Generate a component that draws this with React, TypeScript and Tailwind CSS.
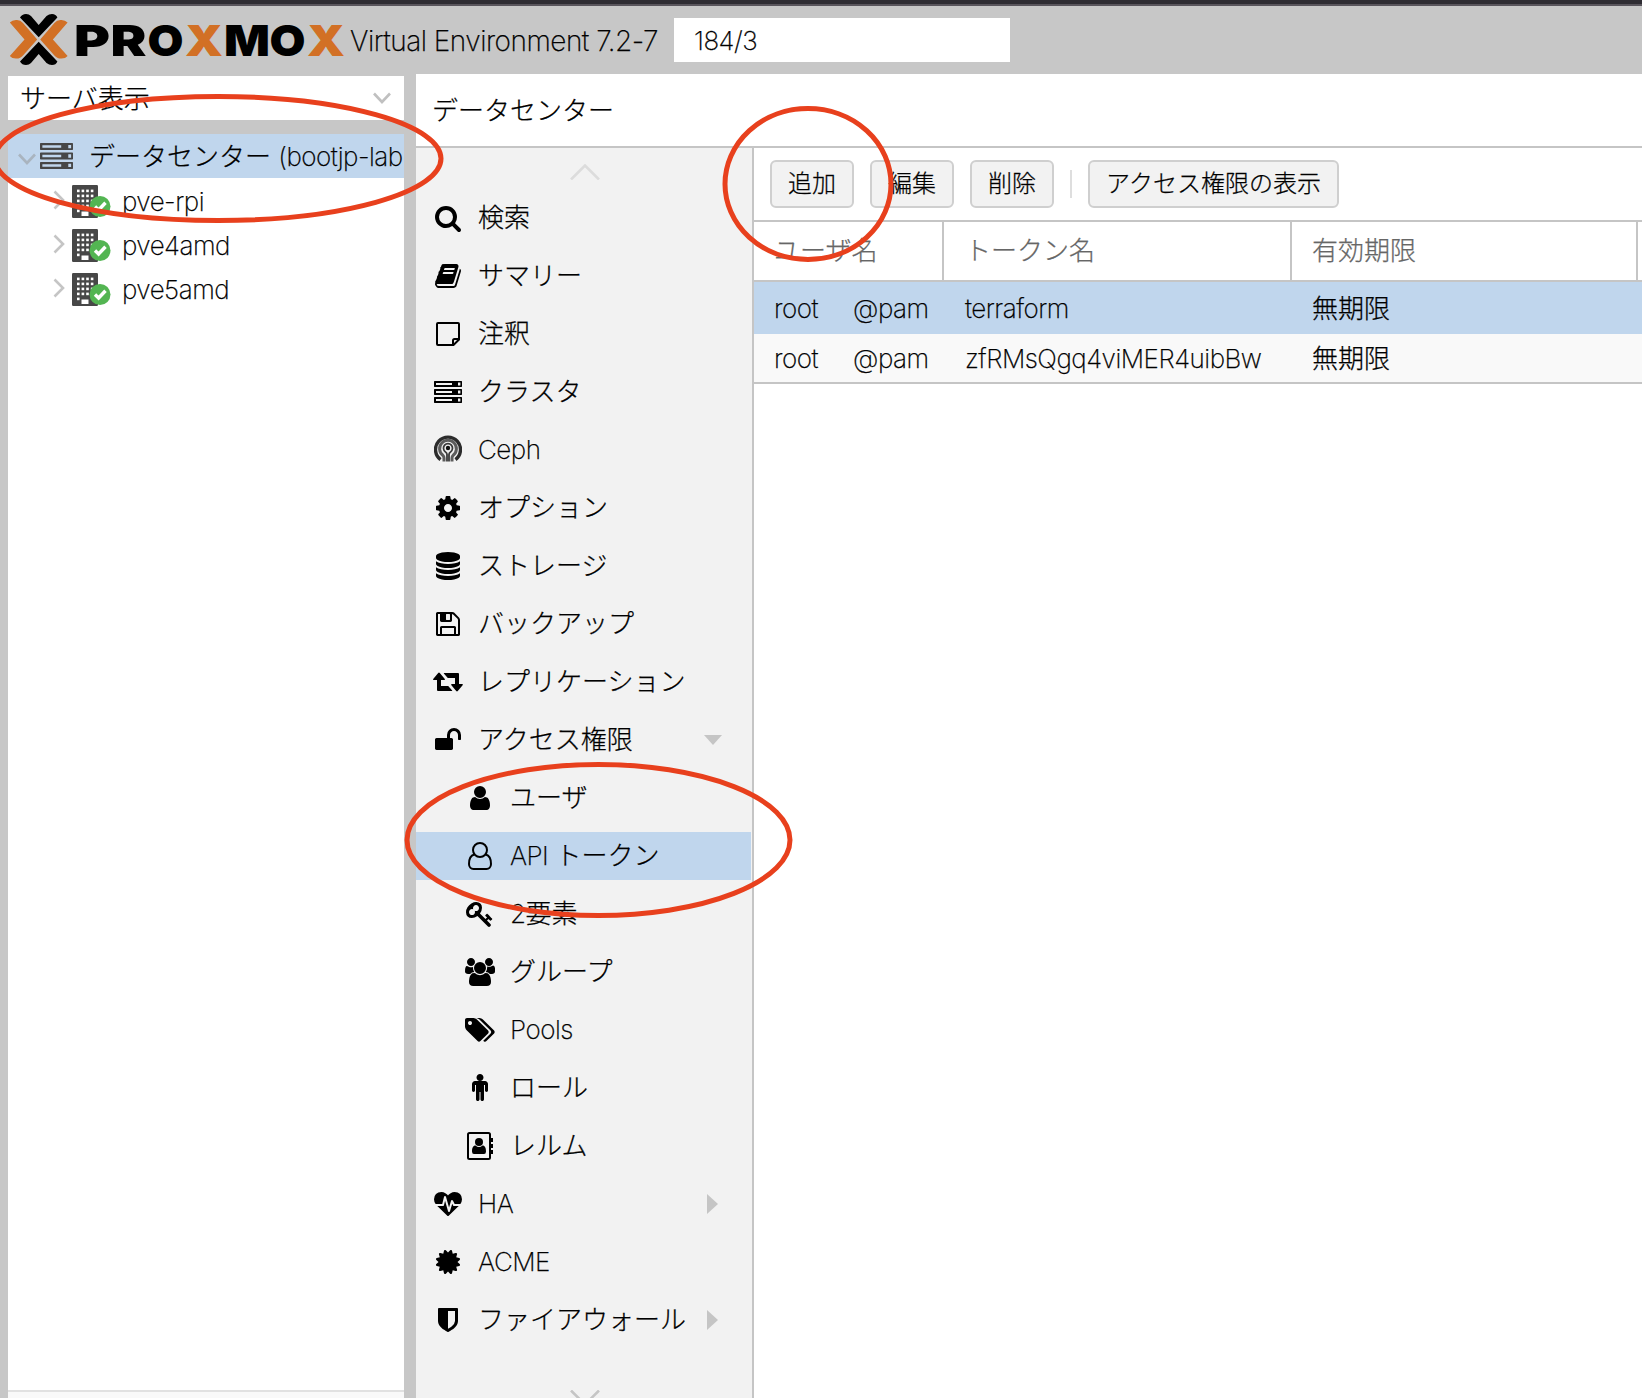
import React, { ReactNode } from "react";

const P = {
  search:
    "M1216 832q0-185-131.5-316.5t-316.5-131.5-316.5 131.5-131.5 316.5 131.5 316.5 316.5 131.5 316.5-131.5 131.5-316.5zm512 832q0 52-38 90t-90 38q-54 0-90-38l-343-342q-179 124-399 124-143 0-273.5-55.5t-225-150-150-225-55.5-273.5 55.5-273.5 150-225 225-150 273.5-55.5 273.5 55.5 225 150 150 225 55.5 273.5q0 220-124 399l343 343q37 37 37 90z",
  book:
    "M1703 478q40 57 18 129l-275 906q-19 64-76.5 107.5t-122.5 43.5h-923q-77 0-148.5-53.5t-99.5-131.5q-24-67-2-127 0-4 3-27t4-37q1-8-3-21.5t-3-19.5q2-11 8-21t16.5-23.5 16.5-23.5q23-38 45-91.5t30-91.5q3-10 .5-30t-.5-28q3-11 17-28t17-23q21-36 42-92t25-90q1-9-2.5-32t.5-28q4-13 22-30.5t22-22.5q19-26 42.5-84.5t27.5-96.5q1-8-3-25.5t-2-26.5q2-8 9-18t18-23 17-21q8-12 16.5-30.5t15-35 16-36 19.5-32 26.5-23.5 36-11.5 47.5 5.5l-1 3q38-9 51-9h761q74 0 114 56t18 130l-274 906q-36 119-71.5 153.5t-128.5 34.5h-869q-27 0-38 15-11 16-1 43 24 70 144 70h923q29 0 56-15.5t35-41.5l300-987q7-22 5-57 38 15 59 43zm-1064 2q-4 13 2 22.5t20 9.5h608q13 0 25.5-9.5t16.5-22.5l21-64q4-13-2-22.5t-20-9.5h-608q-13 0-25.5 9.5t-16.5 22.5zm-83 256q-4 13 2 22.5t20 9.5h608q13 0 25.5-9.5t16.5-22.5l21-64q4-13-2-22.5t-20-9.5h-608q-13 0-25.5 9.5t-16.5 22.5z",
  cog:
    "M1152 896q0-106-75-181t-181-75-181 75-75 181 75 181 181 75 181-75 75-181zm512-109v222q0 12-8 23t-20 13l-185 28q-19 54-39 91 35 50 107 138 10 12 10 25t-9 23q-27 37-99 108t-94 71q-12 0-26-9l-138-108q-44 23-91 38-16 136-29 186-7 28-36 28h-222q-14 0-24.5-8.5t-11.5-21.5l-28-184q-49-16-90-37l-141 107q-10 9-25 9-14 0-25-11-126-114-165-168-7-10-7-23 0-12 8-23 15-21 51-66.5t54-70.5q-27-50-41-99l-183-27q-13-2-21-12.5t-8-23.5v-222q0-12 8-23t19-13l186-28q14-46 39-92-40-57-107-138-10-12-10-24 0-10 9-23 26-36 98.5-107.5t94.5-71.5q13 0 26 10l138 107q44-23 91-38 16-136 29-186 7-28 36-28h222q14 0 24.5 8.5t11.5 21.5l28 184q49 16 90 37l142-107q9-9 24-9 13 0 25 10 129 119 165 170 7 8 7 22 0 12-8 23-15 21-51 66.5t-54 70.5q26 50 41 98l183 28q13 2 21 12.5t8 23.5z",
  database:
    "M896 768q237 0 443-43t325-127v170q0 69-103 128t-280 93.5-385 34.5-385-34.5-280-93.5-103-128v-170q119 84 325 127t443 43zm0 768q237 0 443-43t325-127v170q0 69-103 128t-280 93.5-385 34.5-385-34.5-280-93.5-103-128v-170q119 84 325 127t443 43zm0-384q237 0 443-43t325-127v170q0 69-103 128t-280 93.5-385 34.5-385-34.5-280-93.5-103-128v-170q119 84 325 127t443 43zm0-1152q208 0 385 34.5t280 93.5 103 128v128q0 69-103 128t-280 93.5-385 34.5-385-34.5-280-93.5-103-128v-128q0-69 103-128t280-93.5 385-34.5z",
  floppy:
    "M512 1536h768v-384h-768v384zm896 0h128v-896q0-14-10-38.5t-20-34.5l-281-281q-10-10-34-20t-39-10v416q0 40-28 68t-68 28h-576q-40 0-68-28t-28-68v-416h-128v1280h128v-416q0-40 28-68t68-28h832q40 0 68 28t28 68v416zm-384-928v-320q0-13-9.5-22.5t-22.5-9.5h-192q-13 0-22.5 9.5t-9.5 22.5v320q0 13 9.5 22.5t22.5 9.5h192q13 0 22.5-9.5t9.5-22.5zm640 32v928q0 40-28 68t-68 28h-1344q-40 0-68-28t-28-68v-1344q0-40 28-68t68-28h928q40 0 88 20t76 48l280 280q28 28 48 76t20 88z",
  unlock:
    "M1728 576v256q0 26-19 45t-45 19h-64q-26 0-45-19t-19-45v-256q0-106-75-181t-181-75-181 75-75 181v192h96q40 0 68 28t28 68v576q0 40-28 68t-68 28h-960q-40 0-68-28t-28-68v-576q0-40 28-68t68-28h672v-192q0-185 131.5-316.5t316.5-131.5 316.5 131.5 131.5 316.5z",
  user:
    "M1536 1399q0 109-62.5 187t-150.5 78h-854q-88 0-150.5-78t-62.5-187q0-85 8.5-160.5t31.5-152 58.5-131 94-89 134.5-34.5q131 128 313 128t313-128q76 0 134.5 34.5t94 89 58.5 131 31.5 152 8.5 160.5zm-256-887q0 159-112.5 271.5t-271.5 112.5-271.5-112.5-112.5-271.5 112.5-271.5 271.5-112.5 271.5 112.5 112.5 271.5z",
  key:
    "M832 512q0-80-56-136t-136-56-136 56-56 136q0 42 19 83-41-19-83-19-80 0-136 56t-56 136 56 136 136 56 136-56 56-136q0-42-19-83 41 19 83 19 80 0 136-56t56-136zm851 704q0 17-49 66t-66 49q-9 0-28.5-16t-36.5-33-38.5-40-24.5-26l-96 96 220 220q28 28 28 68 0 42-39 81t-81 39q-40 0-68-28l-671-671q-176 131-365 131-163 0-265.5-102.5t-102.5-265.5q0-160 95-313t248-248 313-95q163 0 265.5 102.5t102.5 265.5q0 189-131 365l355 355 96-96q-3-3-26-24.5t-40-38.5-33-36.5-16-28.5q0-17 49-66t66-49q13 0 23 10 6 6 46 44.5t82 79.5 86.5 86 73 78 28.5 41z",
  users:
    "M529 896q-162 5-265 128h-134q-82 0-138-40.5t-56-118.5q0-353 124-353 6 0 43.5 21t97.5 42.5 119 21.5q67 0 133-23-5 37-5 66 0 159 81 256zm1071 637q0 120-73 189.5t-194 69.5h-874q-121 0-194-69.5t-73-189.5q0-53 3.5-103.5t14-109 26.5-108.5 43-97.5 62-81 85.5-53.5 111.5-20q10 0 43 21.5t73 48 107 48 135 21.5 135-21.5 107-48 73-48 43-21.5q61 0 111.5 20t85.5 53.5 62 81 43 97.5 26.5 108.5 14 109 3.5 103.5zm-1024-1277q0 106-75 181t-181 75-181-75-75-181 75-181 181-75 181 75 75 181zm704 384q0 159-112.5 271.5t-271.5 112.5-271.5-112.5-112.5-271.5 112.5-271.5 271.5-112.5 271.5 112.5 112.5 271.5zm576 225q0 78-56 118.5t-138 40.5h-134q-103-123-265-128 93-134 93-293 0-29-5-66 66 23 133 23 59 0 119-21.5t97.5-42.5 43.5-21q124 0 124 353zm-128-609q0 106-75 181t-181 75-181-75-75-181 75-181 181-75 181 75 75 181z",
  tags:
    "M384 448q0-53-37.5-90.5t-90.5-37.5-90.5 37.5-37.5 90.5 37.5 90.5 90.5 37.5 90.5-37.5 37.5-90.5zm1067 576q0 53-37 90l-491 492q-39 37-91 37-53 0-90-37l-715-716q-38-37-64.5-101t-26.5-117v-416q0-52 38-90t90-38h416q53 0 117 26.5t102 64.5l715 714q37 39 37 91zm384 0q0 53-37 90l-491 492q-39 37-91 37-36 0-59-14t-53-45l470-470q37-37 37-90 0-52-37-91l-715-714q-38-38-102-64.5t-117-26.5h224q53 0 117 26.5t102 64.5l715 714q37 39 37 91z",
  male:
    "M1280 640v416q0 40-28 68t-68 28-68-28-28-68v-352h-64v912q0 46-33 79t-79 33-79-33-33-79v-464h-64v464q0 46-33 79t-79 33-79-33-33-79v-912h-64v352q0 40-28 68t-68 28-68-28-28-68v-416q0-80 56-136t136-56h640q80 0 136 56t56 136zm-288-416q0 93-65.5 158.5t-158.5 65.5-158.5-65.5-65.5-158.5 65.5-158.5 158.5-65.5 158.5 65.5 65.5 158.5z",
  heartbeat:
    "M1280 1024h305q-5 6-10 10.5t-9 7.5l-3 4-623 600q-18 18-44 18t-44-18l-624-602q-5-2-21-20h369q22 0 39.5-13.5t22.5-34.5l70-281 190 667q6 20 23 33t39 13q21 0 38-13t23-33l146-485 56 112q18 35 57 35zm512-428q0 145-103 300h-369l-111-221q-8-17-25.5-27t-36.5-8q-45 5-56 46l-129 430-196-686q-6-20-23.5-33t-39.5-13-39 13.5-22 34.5l-116 464h-423q-103-155-103-300 0-220 127-344t351-124q62 0 126.5 21.5t120 58 95.5 68.5 76 68q36-36 76-68t95.5-68.5 120-58 126.5-21.5q224 0 351 124t127 344z",
  certificate:
    "M1504 896l138 135q30 28 20 70-12 41-52 51l-188 48 53 186q12 41-19 70-29 31-70 19l-186-53-48 188q-10 40-51 52-12 2-19 2-31 0-51-22l-135-138-135 138q-28 30-70 20-41-11-51-52l-48-188-186 53q-41 12-70-19-31-29-19-70l53-186-188-48q-40-10-52-51-10-42 20-70l138-135-138-135q-30-28-20-70 12-41 52-51l188-48-53-186q-12-41 19-70 29-31 70-19l186 53 48-188q10-41 51-51 41-12 70 19l135 139 135-139q29-30 70-19 41 10 51 51l48 188 186-53q41-12 70 19 31 29 19 70l-53 186 188 48q40 10 52 51 10 42-20 70z",
  shield:
    "M1344 960v-640h-448v1137q119-63 213-137 235-184 235-360zm192-768v768q0 86-33.5 170.5t-83 150-118 127.5-126.5 103-121 77.5-89.5 49.5-42.5 20q-12 6-26 6t-26-6q-16-7-42.5-20t-89.5-49.5-121-77.5-126.5-103-118-127.5-83-150-33.5-170.5v-768q0-26 19-45t45-19h1152q26 0 45 19t19 45z",
};

function Glyph({ d, box = "0 0 1792 1792", w = 28 }: { d: string; box?: string; w?: number }) {
  return (
    <svg viewBox={box} width={w} height={28} fill="currentColor">
      <path d={d} />
    </svg>
  );
}

function ServerIcon({ w, h }: { w: number; h: number }) {
  return (
    <svg viewBox="0 0 28 22" width={w} height={h} preserveAspectRatio="none" fill="currentColor">
      {[0, 8, 16].map((y) => (
        <path
          key={y}
          fillRule="evenodd"
          d={`M0.5 ${y}H27.5L28 ${y + 0.5}V${y + 5.5}L27.5 ${y + 6}H0.5L0 ${y + 5.5}V${y + 0.5}ZM2 ${y + 2}V${y + 4}H18V${y + 2}ZM24 ${y + 1.6}V${y + 4.4}H26.4V${y + 1.6}Z`}
        />
      ))}
    </svg>
  );
}

function NoteIcon() {
  return (
    <svg viewBox="0 0 24 24" width={24} height={24} fill="none" stroke="currentColor" strokeWidth={2}>
      <path d="M2 1H22Q23 1 23 2V17.5L17.5 23H2Q1 23 1 22V2Q1 1 2 1Z" />
      <path d="M17 23V18.5Q17 17 18.500 17H23" />
    </svg>
  );
}

function CephIcon() {
  return (
    <svg className="-mt-1" viewBox="0 0 28 28" width={28} height={28} fill="none">
      <path d="M6.500 25.600A12.500 12.500 0 1 1 21.500 25.600" stroke="#2c2c2c" strokeWidth={3.400} />
      <path d="M10 27.500V24Q10 22.600 8.800 21.300A8.400 8.400 0 1 1 19.200 21.300Q18 22.600 18 24V27.500" stroke="#5c5c5c" strokeWidth={3} />
      <path d="M13 27.500V20.500Q13 18.800 11.500 17.900A4.500 4.500 0 1 1 16.500 17.900Q15 18.800 15 20.500V27.500" stroke="#3a3a3a" strokeWidth={1.800} />
      <circle cx={14} cy={14} r={2.200} fill="#111" />
    </svg>
  );
}

function RetweetIcon() {
  return (
    <svg viewBox="0 0 30 20" width={30} height={20} fill="currentColor">
      <path d="M19 18.300Q19.600 19 18.600 19H5Q4 19 4 18V8H1Q-.5 8 .4 6.700L5.200 1Q6 .2 6.800 1L11.600 6.700Q12.500 8 11 8H8V14H15.200Z" />
      <path d="M11 1.700Q10.400 1 11.400 1H25Q26 1 26 2V12H29Q30.500 12 29.600 13.300L24.800 19Q24 19.800 23.200 19L18.400 13.300Q17.500 12 19 12H22V6H14.800Z" />
    </svg>
  );
}

function UserOutlineIcon() {
  return (
    <svg viewBox="0 0 24 28" width={24} height={28} fill="none" stroke="currentColor" strokeWidth={2}>
      <circle cx={12} cy={8} r={7} />
      <path d="M6.200 12.500C2.500 13.500 1 17.500 1 22C1 25 3 27 5.500 27H18.500C21 27 23 25 23 22C23 17.500 21.500 13.500 17.800 12.500" />
    </svg>
  );
}

function AddressBookIcon() {
  return (
    <svg viewBox="0 0 26 28" width={26} height={28} fill="currentColor">
      <rect x={1} y={1} width={22} height={26} rx={1.500} fill="none" stroke="currentColor" strokeWidth={2} />
      <path d="M24 6H26V10H24ZM24 12H26V16H24ZM24 18H26V22H24Z" />
      <circle cx={12} cy={10} r={4} />
      <path d="M8.500 13.500Q12 16.500 15.500 13.500C18 13.500 19 16 19 19.500Q19 22 17 22H7Q5 22 5 19.500C5 16 6 13.500 8.500 13.500Z" />
    </svg>
  );
}

function NodeIcon() {
  const windows: ReactNode[] = [];
  for (let r = 0; r < 5; r++)
    for (let c = 0; c < 4; c++) {
      if (r === 4 && c > 0) continue;
      windows.push(<rect key={`${r}-${c}`} x={5 + c * 4.6} y={4.600 + r * 5} width={2.600} height={2.600} fill="#fff" />);
    }
  return (
    <svg viewBox="0 0 39 33" width={39} height={33}>
      <rect width={26} height={33} rx={1.200} fill="#474747" />
      {windows}
      <rect x={9.500} y={26.500} width={7} height={4.500} fill="#fff" />
      <circle cx={28} cy={21.500} r={10.500} fill="#53b552" />
      <path d="M23 21.500L26.600 25L33.500 17.800" fill="none" stroke="#fff" strokeWidth={3.400} />
    </svg>
  );
}

function Chevron({ w, h, d, color }: { w: number; h: number; d: string; color: string }) {
  return (
    <svg viewBox={`0 0 ${w} ${h}`} width={w} height={h} fill="none" stroke={color} strokeWidth={2.600}>
      <path d={d} />
    </svg>
  );
}

function Lat({ children }: { children: ReactNode }) {
  return <span className="tracking-[-0.5px]">{children}</span>;
}

function Logo() {
  const letters = [
    { c: "P", x: 74, w: 36, o: false },
    { c: "R", x: 110.5, w: 36, o: false },
    { c: "O", x: 147.5, w: 36, o: false },
    { c: "X", x: 185, w: 38, o: true },
    { c: "M", x: 224, w: 46, o: false },
    { c: "O", x: 269.5, w: 36, o: false },
    { c: "X", x: 307, w: 38, o: true },
  ];
  const orange = "M9.800 22.500Q12.500 19.600 17 20Q20.500 20.200 23 23L37.200 39.500L23 55.500Q20.500 58.600 16.500 58.600Q12 58.800 9.800 56L24.500 39.500Z";
  const black = "M20 17.500Q22 14 26 14Q29 14 31 16L38.700 25L46.500 16Q49 14 52 14Q56 14 57.400 17.500L38.700 37.200Z";
  return (
    <svg className="block shrink-0" viewBox="0 6 346 68" width={346} height={68}>
      <path d={orange} fill="#d27025" />
      <path d={orange} fill="#d27025" transform="translate(77.4 0) scale(-1 1)" />
      <path d={black} />
      <path d={black} transform="translate(0 79) scale(1 -1)" />
      {letters.map((l, i) => (
        <text
          key={i}
          x={l.x}
          y={55.500}
          textLength={l.w}
          lengthAdjust="spacingAndGlyphs"
          fill={l.o ? "#d27025" : "#000"}
          className="font-['Inter',sans-serif] text-[43px] font-black"
        >
          {l.c}
        </text>
      ))}
    </svg>
  );
}

type Item = { icon: ReactNode; label: ReactNode; sub?: boolean; active?: boolean; arrow?: "down" | "right" };

const items: Item[] = [
  { icon: <Glyph d={P.search} />, label: "検索" },
  { icon: <Glyph d={P.book} />, label: "サマリー" },
  { icon: <NoteIcon />, label: "注釈" },
  { icon: <ServerIcon w={28} h={22} />, label: "クラスタ" },
  { icon: <CephIcon />, label: <Lat>Ceph</Lat> },
  { icon: <Glyph d={P.cog} />, label: "オプション" },
  { icon: <Glyph d={P.database} />, label: "ストレージ" },
  { icon: <Glyph d={P.floppy} />, label: "バックアップ" },
  { icon: <RetweetIcon />, label: "レプリケーション" },
  { icon: <Glyph d={P.unlock} />, label: "アクセス権限", arrow: "down" },
  { icon: <Glyph d={P.user} />, label: "ユーザ", sub: true },
  { icon: <UserOutlineIcon />, label: <><Lat>API</Lat> トークン</>, sub: true, active: true },
  { icon: <Glyph d={P.key} />, label: <><Lat>2</Lat>要素</>, sub: true },
  { icon: <Glyph d={P.users} box="-64 0 1920 1792" w={30} />, label: "グループ", sub: true },
  { icon: <Glyph d={P.tags} box="-64 0 1920 1792" w={30} />, label: <Lat>Pools</Lat>, sub: true },
  { icon: <Glyph d={P.male} box="-128 0 1792 1792" />, label: "ロール", sub: true },
  { icon: <AddressBookIcon />, label: "レルム", sub: true },
  { icon: <Glyph d={P.heartbeat} />, label: <Lat>HA</Lat>, arrow: "right" },
  { icon: <Glyph d={P.certificate} />, label: <Lat>ACME</Lat> },
  { icon: <Glyph d={P.shield} />, label: "ファイアウォール", arrow: "right" },
];

function MenuRow({ item }: { item: Item }) {
  return (
    <div className={`flex h-12 shrink-0 items-center ${item.active ? "mr-px bg-[#c0d6ed]" : ""} ${item.sub ? "pl-[46px]" : "pl-[14px]"}`}>
      <div className="flex w-9 shrink-0 justify-center">{item.icon}</div>
      <div className="grow pl-3 whitespace-nowrap">{item.label}</div>
      {item.arrow === "down" && (
        <svg className="mr-[30px]" viewBox="0 0 18 10" width={18} height={10} fill="#c5c5c5">
          <path d="M0 0H18L9 10Z" />
        </svg>
      )}
      {item.arrow === "right" && (
        <svg className="mr-[34px]" viewBox="0 0 11 20" width={11} height={20} fill="#c5c5c5">
          <path d="M0 0L11 10L0 20Z" />
        </svg>
      )}
    </div>
  );
}

function Button({ children, w }: { children: ReactNode; w: string }) {
  return (
    <button className={`flex h-12 items-center justify-center rounded-[6px] border-2 border-[#cfcfcf] bg-[#f2f2f2] pb-px text-[24px] whitespace-nowrap ${w}`}>
      {children}
    </button>
  );
}

export default function App() {
  return (
    <div className="relative flex h-[1398px] w-[1642px] flex-col overflow-hidden bg-[#c7c7c7] font-['Inter','Noto_Sans_CJK_JP',sans-serif] text-[26px] leading-[38px] font-[250] text-black [-webkit-text-stroke-width:0.25px]">
      <div className="h-[6px] shrink-0 border-b-2 border-[#59555c] bg-[#2f2d33]" />
      <header className="flex h-[68px] shrink-0">
        <Logo />
        <div className="w-[328px] pt-4 pl-1 text-[28px] tracking-[-0.5px] whitespace-nowrap">Virtual Environment 7.2-7</div>
        <div className="mt-3 h-11 w-[336px] bg-white pt-1 pl-5 text-[26px] tracking-[-0.5px]">184/3</div>
      </header>

      <div className="flex min-h-0 grow">
        <aside className="ml-2 flex w-[396px] shrink-0 flex-col pt-[2px]">
          <div className="flex h-11 shrink-0 items-center justify-between bg-white pr-[13px] pl-3">
            <span className="pt-[2px]">サーバ表示</span>
            <Chevron w={18} h={12} d="M1 1.500L9 10L17 1.500" color="#c0c0c0" />
          </div>
          <div className="mt-[14px] flex grow flex-col bg-white">
            <div className="flex h-11 items-center overflow-hidden bg-[#c0d6ed] whitespace-nowrap">
              <div className="ml-[10px] pt-[5px]">
                <Chevron w={18} h={12} d="M1 1.500L9 10L17 1.500" color="#a9b4bf" />
              </div>
              <div className="ml-1 text-[#474747]">
                <ServerIcon w={33} h={26} />
              </div>
              <span className="ml-4 pt-[2px]">
                データセンター <Lat>(bootjp-lab</Lat>
              </span>
            </div>
            {["pve-rpi", "pve4amd", "pve5amd"].map((n) => (
              <div key={n} className="flex h-11 items-center pl-[45px]">
                <Chevron w={12} h={20} d="M1.500 1.500L10 10L1.500 18.500" color="#c5c5c5" />
                <div className="ml-[7px] pt-[3px]">
                  <NodeIcon />
                </div>
                <span className="ml-[11px] pt-1">
                  <Lat>{n}</Lat>
                </span>
              </div>
            ))}
          </div>
          <div className="h-2 shrink-0 border-t-2 border-[#e1e1e1] bg-[#f9f9f9]" />
        </aside>

        <main className="ml-3 flex min-w-0 grow flex-col bg-white">
          <div className="h-[74px] shrink-0 border-b-2 border-[#c5c5c5] pt-[18px] pl-4">データセンター</div>
          <div className="flex min-h-0 grow">
            <nav className="flex w-[338px] shrink-0 flex-col overflow-hidden border-r-2 border-[#c5c5c5] bg-[#f2f2f2]">
              <div className="flex h-[46px] shrink-0 justify-center pt-4 pl-[2px]">
                <Chevron w={30} h={16} d="M1 15.500L15 1.500L29 15.500" color="#dcdcdc" />
              </div>
              <div className="flex shrink-0 flex-col gap-[10px]">
                {items.map((it, i) => (
                  <MenuRow key={i} item={it} />
                ))}
              </div>
              <div className="flex justify-center pt-[46px] pl-[2px]">
                <Chevron w={30} h={16} d="M1 .5L15 14.500L29 .5" color="#c5c5c5" />
              </div>
            </nav>

            <section className="flex min-w-0 grow flex-col">
              <div className="flex h-[74px] shrink-0 items-center gap-4 border-b-2 border-[#c5c5c5] pl-4">
                <Button w="w-[84px]">追加</Button>
                <Button w="w-[84px]">編集</Button>
                <Button w="w-[84px]">削除</Button>
                <div className="h-7 w-[2px] bg-[#dedede]" />
                <Button w="w-[251px]">アクセス権限の表示</Button>
              </div>
              <div className="flex h-[60px] shrink-0 border-b-2 border-[#c5c5c5] text-[#666]">
                <div className="w-[190px] border-r-2 border-[#c5c5c5] pt-[10px] pl-5">ユーザ名</div>
                <div className="w-[348px] border-r-2 border-[#c5c5c5] pt-[10px] pl-[21px]">トークン名</div>
                <div className="w-[346px] border-r-2 border-[#c5c5c5] pt-[10px] pl-5">有効期限</div>
              </div>
              {[
                { t: "terraform", c: "h-[52px] bg-[#c0d6ed] pt-[2px]" },
                { t: "zfRMsQgq4viMER4uibBw", c: "h-[50px] border-b-2 border-[#c5c5c5] bg-[#f9f9f9] pt-[2px]" },
              ].map((r) => (
                <div key={r.t} className={`flex shrink-0 items-center ${r.c}`}>
                  <div className="w-[79px] pl-5"><Lat>root</Lat></div>
                  <div className="w-[111px] pl-5"><Lat>@pam</Lat></div>
                  <div className="w-[348px] pl-[21px]"><Lat>{r.t}</Lat></div>
                  <div className="pl-5">無期限</div>
                </div>
              ))}
            </section>
          </div>
        </main>
      </div>

      <svg className="pointer-events-none absolute inset-0" width={1642} height={1398} fill="none" stroke="#e8401d" strokeWidth={5}>
        <ellipse cx={218} cy={158.500} rx={223} ry={62} />
        <ellipse cx={808} cy={184} rx={83} ry={75.500} />
        <ellipse cx={598.500} cy={840} rx={191.500} ry={75.500} />
      </svg>
    </div>
  );
}
